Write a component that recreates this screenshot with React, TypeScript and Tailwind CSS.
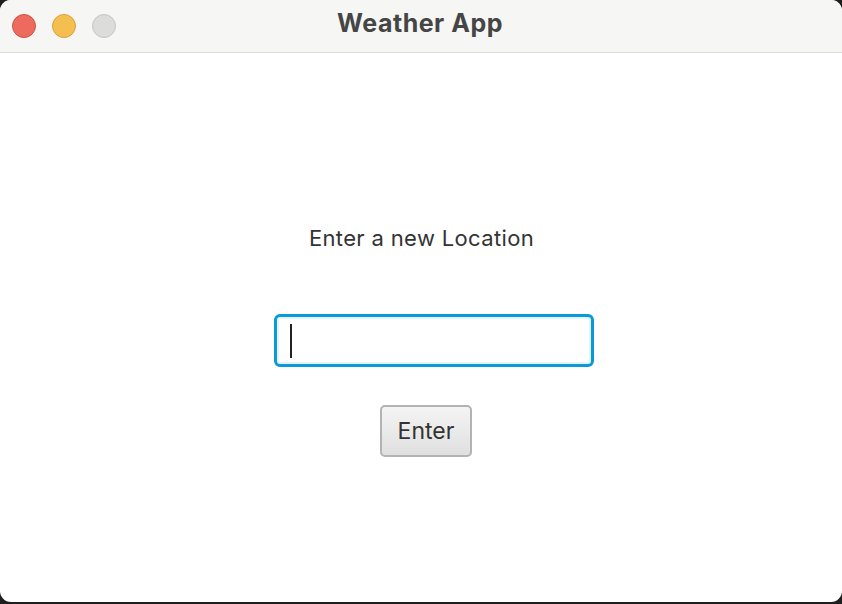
import { useState } from 'react';

export default function App() {
  const [location] = useState('');

  return (
    <div className="w-[842px] h-[604px] bg-[#1e1e1e] overflow-hidden">
      <div className="w-[842px] h-[602px] bg-white rounded-[11px] overflow-hidden flex flex-col font-['Inter','Liberation_Sans',sans-serif]">
        {/* Title bar */}
        <div className="h-[53px] shrink-0 bg-[#f6f6f4] border-b border-[#dcdcdc] flex items-center relative">
          <div className="flex items-center gap-[16px] pl-[12px]">
            <span className="w-[24px] h-[24px] rounded-full bg-[#ed6a5e] border border-[#d35246]" />
            <span className="w-[24px] h-[24px] rounded-full bg-[#f5bf4f] border border-[#d9a23b]" />
            <span className="w-[24px] h-[24px] rounded-full bg-[#dcdcdb] border border-[#c6c6c5]" />
          </div>
          <div className="absolute inset-0 flex items-center justify-center pr-[2px] pb-[5px] text-[25px] tracking-[0.5px] font-bold text-[#454545]">
            Weather App
          </div>
        </div>

        {/* Content */}
        <div className="flex-1 flex flex-col items-center pt-[170px]">
          <div className="text-[22px] tracking-[0.35px] text-[#333] leading-[30px] pl-[1px]">Enter a new Location</div>
          <div className="mt-[61px] ml-[25px] w-[320px] h-[53px] rounded-[6px] border-[3px] border-[#0a9ad6] p-[2px] bg-[#e3f3fa]">
            <div className="w-full h-full rounded-[2px] bg-white flex items-center pl-[11px] text-[20px] text-[#333]">
              {location}
              <span className="w-[2px] h-[34px] bg-[#222]" />
            </div>
          </div>
          <button className="mt-[38px] ml-[10px] w-[92px] h-[52px] rounded-[5px] border-2 border-[#b3b3b3] bg-gradient-to-b from-[#f4f4f4] to-[#e0e0e0] text-[23px] text-[#333] leading-none">
            Enter
          </button>
        </div>
      </div>
    </div>
  );
}
